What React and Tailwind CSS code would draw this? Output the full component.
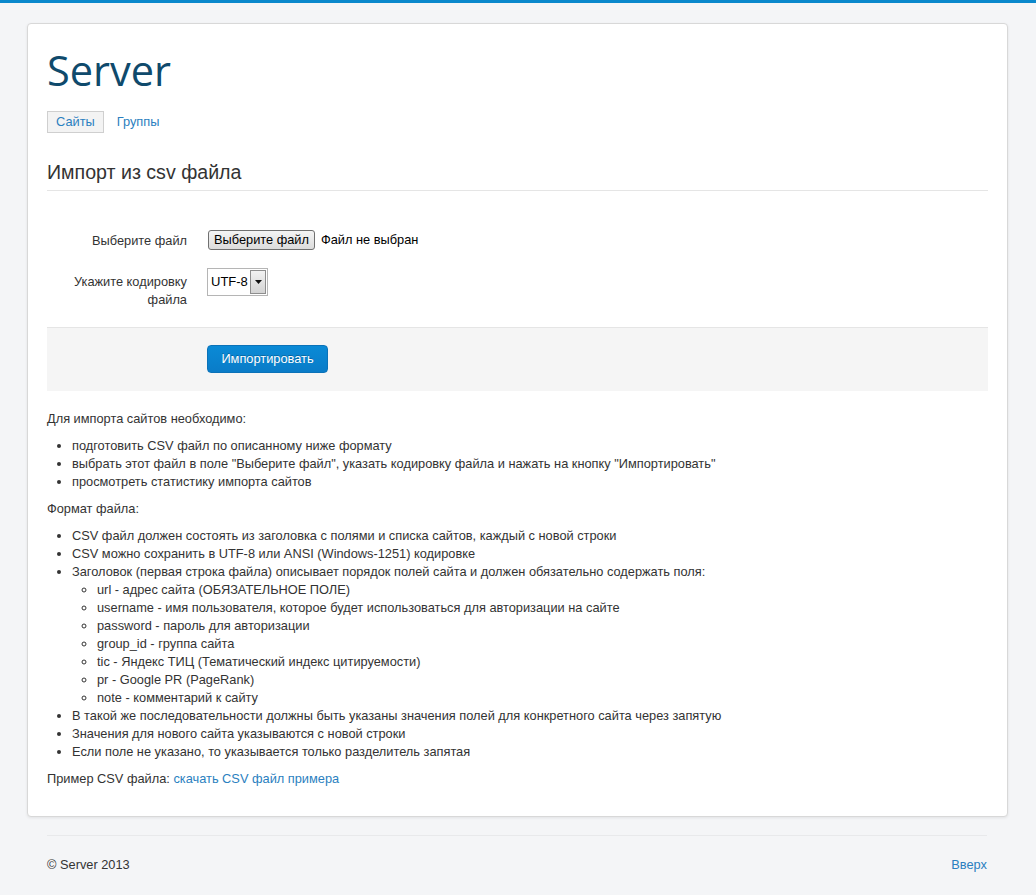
export default function App() {
  const font = { fontFamily: '"Liberation Sans", Arial, sans-serif' };
  return (
    <div className="min-h-[895px] bg-[#f4f5f7] text-[12.8px] leading-[18px] text-[#333]" style={font}>
      <div className="h-[3px] bg-[#0a88cc]" />
      <div className="pt-[20px]">
        <div className="ml-[27px] w-[981px] rounded-[4px] border border-[#d8d8d8] bg-white px-[19px] pt-[20px] pb-[19px] shadow-[0_1px_3px_rgba(0,0,0,0.08)]">
          <h1
            className="text-[41.5px] leading-[52px] font-normal text-[#0f4a6c]"
            style={{ fontFamily: '"Open Sans", "Noto Sans", sans-serif' }}
          >
            Server
          </h1>
          <div className="mt-[15px] flex gap-[4px]">
            <span className="border border-[#cfcfcf] bg-[#f3f3f3] px-[8px] leading-[20px] text-[#2b7fc0]">Сайты</span>
            <span className="border border-transparent px-[8px] leading-[20px] text-[#2b7fc0]">Группы</span>
          </div>
          <h2 className="mt-[21px] border-b border-[#e5e5e5] text-[19.6px] leading-[36px] font-normal text-[#333]">
            Импорт из csv файла
          </h2>

          <div className="mt-[38px] flex">
            <div className="w-[140px] pt-[3px] text-right">Выберите файл</div>
            <div className="ml-[20px] flex items-center">
              <span className="ml-[1px] flex h-[20px] items-center whitespace-nowrap rounded-[3px] border border-[#707070] bg-gradient-to-b from-[#f4f4f4] to-[#dcdcdc] px-[5px] text-black">
                Выберите файл
              </span>
              <span className="ml-[6px] whitespace-nowrap text-black">Файл не выбран</span>
            </div>
          </div>

          <div className="mt-[18px] flex">
            <div className="w-[140px] pt-[5px] text-right">
              Укажите кодировку
              <br />
              файла
            </div>
            <div className="ml-[20px]">
              <div className="flex h-[28px] w-[61px] items-center justify-between border border-[#b5b5b5] bg-white pl-[3px] pr-[1px]">
                <span className="whitespace-nowrap text-[13px] text-black">UTF-8</span>
                <span className="flex h-[24px] w-[16px] shrink-0 items-center justify-center border border-[#8e8e8e] bg-gradient-to-b from-[#f2f2f2] to-[#d4d4d4]">
                  <svg width="7" height="4" viewBox="0 0 7 4">
                    <path d="M0 0h7L3.5 4z" fill="#111" />
                  </svg>
                </span>
              </div>
            </div>
          </div>

          <div className="mt-[18px] border-t border-[#e5e5e5] bg-[#f5f5f5] pt-[17px] pb-[18px] pl-[160px]">
            <button className="h-[28px] w-[121px] rounded-[4px] border border-[#0b72b8] bg-gradient-to-b from-[#0a8ad6] to-[#0a7cc8] text-white [text-shadow:0_-1px_0_rgba(0,0,0,0.25)]">
              Импортировать
            </button>
          </div>

          <p className="mt-[19px] mb-[9px]">Для импорта сайтов необходимо:</p>
          <ul className="mb-[9px] list-disc pl-[25px]">
            <li>подготовить CSV файл по описанному ниже формату</li>
            <li>выбрать этот файл в поле "Выберите файл", указать кодировку файла и нажать на кнопку "Импортировать"</li>
            <li>просмотреть статистику импорта сайтов</li>
          </ul>
          <p className="mb-[9px]">Формат файла:</p>
          <ul className="mb-[9px] list-disc pl-[25px]">
            <li>CSV файл должен состоять из заголовка с полями и списка сайтов, каждый с новой строки</li>
            <li>CSV можно сохранить в UTF-8 или ANSI (Windows-1251) кодировке</li>
            <li>
              Заголовок (первая строка файла) описывает порядок полей сайта и должен обязательно содержать поля:
              <ul className="list-[circle] pl-[25px]">
                <li>url - адрес сайта (ОБЯЗАТЕЛЬНОЕ ПОЛЕ)</li>
                <li>username - имя пользователя, которое будет использоваться для авторизации на сайте</li>
                <li>password - пароль для авторизации</li>
                <li>group_id - группа сайта</li>
                <li>tic - Яндекс ТИЦ (Тематический индекс цитируемости)</li>
                <li>pr - Google PR (PageRank)</li>
                <li>note - комментарий к сайту</li>
              </ul>
            </li>
            <li>В такой же последовательности должны быть указаны значения полей для конкретного сайта через запятую</li>
            <li>Значения для нового сайта указываются с новой строки</li>
            <li>Если поле не указано, то указывается только разделитель запятая</li>
          </ul>
          <p className="mb-[9px]">
            Пример CSV файла: <span className="text-[#2b7fc0]">скачать CSV файл примера</span>
          </p>
        </div>

        <div className="ml-[47px] mr-[49px] mt-[18px] border-t border-[#e8e9eb] pt-[20px] pb-[21px]">
          <div className="flex justify-between">
            <span>© Server 2013</span>
            <span className="text-[#2b7fc0]">Вверх</span>
          </div>
        </div>
      </div>
    </div>
  );
}
